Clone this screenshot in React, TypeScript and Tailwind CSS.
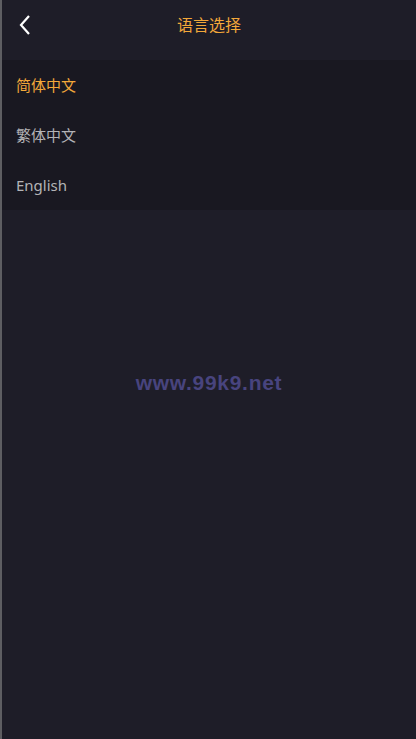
import React from "react";

export default function App() {
  const langs = [
    { label: "简体中文", active: true },
    { label: "繁体中文", active: false },
    { label: "English", active: false },
  ];
  return (
    <div
      className="w-[416px] h-[739px] bg-[#1e1d28] border-l-2 border-[#5e5e62] flex flex-col"
      style={{ fontFamily: '"Noto Sans", "Noto Sans CJK SC", sans-serif' }}
    >
      <div className="h-[50px] mb-[10px] flex items-center relative shrink-0">
        <div className="pl-[16px] flex items-center">
          <svg width="14" height="22" viewBox="0 0 14 22" fill="none">
            <path d="M11 2 L3 11 L11 20" stroke="#ffffff" strokeWidth="2.2" />
          </svg>
        </div>
        <div className="absolute left-0 right-0 text-center text-[16px] text-[#f3a83a] pointer-events-none">
          语言选择
        </div>
      </div>
      <div className="bg-[#191821]">
        {langs.map((l) => (
          <div
            key={l.label}
            className={`h-[50px] flex items-center pl-[14px] text-[15px] ${
              l.active ? "text-[#f3a83a]" : "text-[#b3b3b6]"
            }`}
          >
            {l.label}
          </div>
        ))}
      </div>
      <div className="flex-1 flex justify-center pt-[157px]">
        <div
          className="text-[21px] font-bold text-[#48447e] tracking-[0.7px]"
          style={{ fontFamily: '"Liberation Sans", Arial, sans-serif' }}
        >
          www.99k9.net
        </div>
      </div>
    </div>
  );
}
